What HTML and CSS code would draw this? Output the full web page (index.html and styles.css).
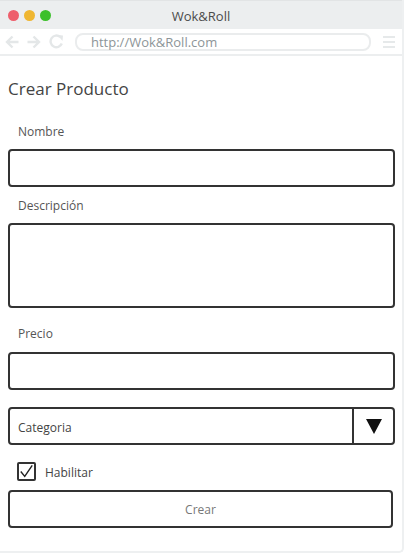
FILE: index.html
```html
<!DOCTYPE html>
<html lang="es">
<head>
<meta charset="utf-8">
<title>Wok&amp;Roll</title>
<link rel="stylesheet" href="styles.css">
</head>
<body>
<div class="window">
  <div class="titlebar">
    <div class="dots">
      <span class="dot red"></span>
      <span class="dot yellow"></span>
      <span class="dot green"></span>
    </div>
    <div class="title">Wok&amp;Roll</div>
    <div></div>
  </div>
  <div class="toolbar">
    <div class="navs">
      <svg class="nav" width="14" height="14" viewBox="0 0 14 14"><path d="M13.5 7H2M7.5 1.5L2 7L7.5 12.5" fill="none" stroke="#e4e7e8" stroke-width="2.4"/></svg>
      <svg class="nav" width="14" height="14" viewBox="0 0 14 14"><path d="M0.5 7H12M6.5 1.5L12 7L6.5 12.5" fill="none" stroke="#e4e7e8" stroke-width="2.4"/></svg>
      <svg class="nav" width="15" height="15" viewBox="0 0 15 15"><path d="M12.8 9.5A5.8 5.8 0 1 1 11.2 3" fill="none" stroke="#e4e7e8" stroke-width="2.4"/><path d="M8.5 1L14 1.5L13.5 7Z" fill="#e4e7e8"/></svg>
    </div>
    <div class="address">http://Wok&amp;Roll.com</div>
    <div class="menu"><span></span><span></span><span></span></div>
  </div>
  <div class="content">
    <h1 class="heading">Crear Producto</h1>
    <div class="label first">Nombre</div>
    <div class="field"></div>
    <div class="label second">Descripción</div>
    <div class="field area"></div>
    <div class="label spaced">Precio</div>
    <div class="field"></div>
    <div class="select">
      <div class="select-text">Categoria</div>
      <div class="select-btn"><svg width="16" height="16" viewBox="0 0 16 16"><path d="M0 1H16L8 16Z" fill="#111"/></svg></div>
    </div>
    <div class="check-row">
      <span class="checkbox"><svg width="17" height="17" viewBox="0 0 17 17"><path d="M2 8.5L6.5 14L15 1.5" fill="none" stroke="#222" stroke-width="1.6"/></svg></span>
      <span class="check-label">Habilitar</span>
    </div>
    <div class="button">Crear</div>
  </div>
</div>
</body>
</html>
```
FILE: styles.css
```css
* { box-sizing: border-box; }
html, body { margin: 0; padding: 0; background: #fff; }
body { font-family: "Open Sans", "Noto Sans", sans-serif; }
.window {
  width: 404px;
  height: 553px;
  border-right: 2px solid #eef0f1;
  border-bottom: 2px solid #eef0f1;
  border-radius: 0 0 5px 0;
  overflow: hidden;
}
.titlebar {
  height: 29px;
  background: #eceeef;
  border-top: 1px solid #e2e4e5;
  display: grid;
  grid-template-columns: 1fr auto 1fr;
  align-items: center;
}
.dots { display: flex; gap: 5px; padding-left: 8px; }
.dot { width: 11px; height: 11px; border-radius: 50%; display: block; }
.red { background: #ee5f6c; }
.yellow { background: #efb631; }
.green { background: #3cc02b; }
.title { font-size: 13px; color: #4b4b4b; padding-top: 1px; }
.toolbar {
  height: 27px;
  border-bottom: 2px solid #eceeef;
  display: flex;
  align-items: center;
  padding-left: 5px;
}
.navs { display: flex; gap: 8px; align-items: center; }
.address {
  margin-left: 11px;
  width: 296px;
  height: 18px;
  border: 2px solid #eaeced;
  border-radius: 8px;
  font-size: 13px;
  line-height: 14px;
  color: #8d9598;
  padding-left: 14px;
}
.menu { margin-left: 12px; display: flex; flex-direction: column; gap: 3px; }
.menu span { display: block; width: 12px; height: 2px; background: #e6e9ea; }
.content { padding: 22px 0 0 8px; }
.heading {
  margin: 0;
  font-size: 17px;
  line-height: 22px;
  font-weight: normal;
  color: #444;
}
.label {
  font-size: 12px;
  line-height: 16px;
  color: #555;
  padding-left: 10px;
}
.label.first { margin: 24px 0 9px; }
.label.second { margin: 11px 0 9px; }
.label.spaced { margin: 18px 0 10px; }
.field {
  width: 387px;
  height: 38px;
  border: 2px solid #333;
  border-radius: 4px;
}
.field.area { height: 85px; }
.select {
  margin-top: 17px;
  width: 387px;
  height: 38px;
  border: 2px solid #333;
  border-radius: 4px;
  display: flex;
}
.select-text {
  flex: 1;
  font-size: 12px;
  line-height: 34px;
  padding-top: 2px;
  color: #444;
  padding-left: 8px;
  border-right: 2px solid #333;
}
.select-btn {
  width: 39px;
  display: flex;
  align-items: center;
  justify-content: center;
}
.check-row {
  margin-top: 17px;
  display: flex;
  align-items: center;
  padding-left: 9px;
  height: 19px;
}
.checkbox {
  width: 19px;
  height: 19px;
  border: 2px solid #333;
  border-radius: 2px;
  display: flex;
  align-items: center;
  justify-content: center;
}
.check-label { margin-left: 9px; font-size: 12px; color: #444; padding-top: 2px; }
.button {
  margin-top: 9px;
  width: 385px;
  height: 38px;
  border: 2px solid #333;
  border-radius: 4px;
  text-align: center;
  font-size: 12px;
  line-height: 34px;
  padding-top: 1px;
  color: #777;
}
```
